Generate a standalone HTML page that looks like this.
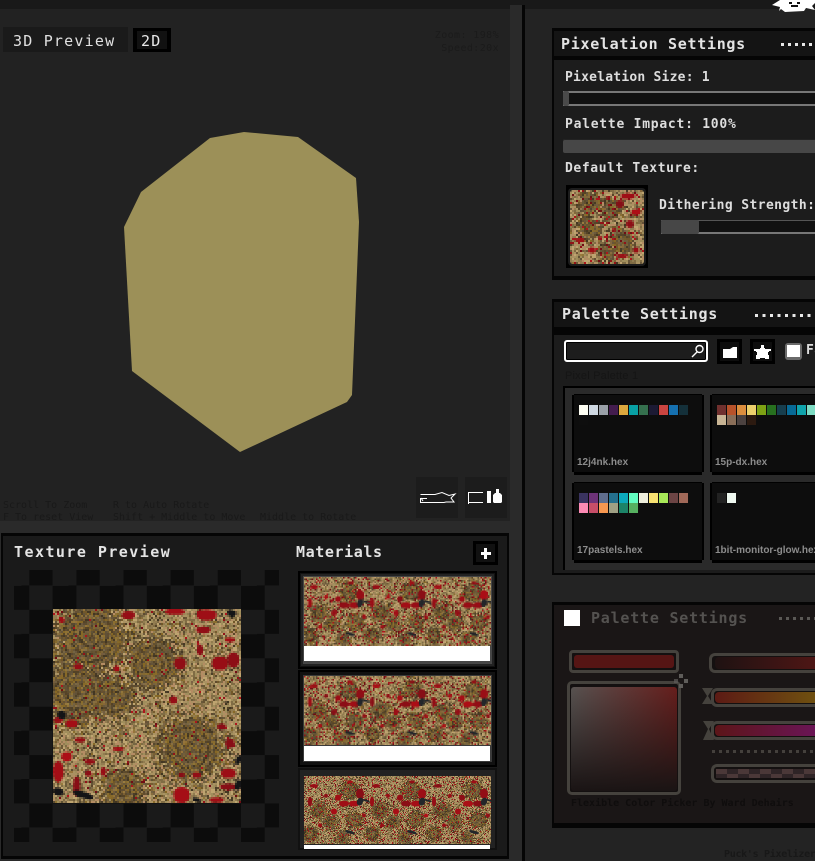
<!DOCTYPE html>
<html><head><meta charset="utf-8"><style>
html,body{margin:0;padding:0;background:#222}
#r{position:relative;width:815px;height:861px;overflow:hidden;background:#222;font-family:"DejaVu Sans Mono","Liberation Mono",monospace;color:#e4e4e4}
#r div,#r canvas,#r svg{position:absolute}
.t{white-space:nowrap;font-weight:bold;line-height:16px;height:16px}
.big{font-size:15px;letter-spacing:.7px}
.lab{font-size:13px;letter-spacing:.45px;color:#ddd}
.dim{font-size:10px;font-weight:normal;color:#191919;line-height:12px;height:12px;white-space:nowrap}
.card{background:#0d0d0d;box-shadow:0 -1px 0 #000,0 3px 0 #000,-2px 0 0 #000,2px 0 0 #000;width:128px;height:77px}
.s{width:9px;height:10px}
.n{font:bold 10px/12px "Liberation Sans",sans-serif;color:#8c8c8c;white-space:nowrap;height:12px}
canvas{image-rendering:pixelated;display:block}
.wh{background:#fff}
.dots{height:3px;background:repeating-linear-gradient(90deg,#e8e8e8 0 3px,transparent 3px 7px)}
.rail{border:3px solid #45423d;border-right:0;border-radius:6px 0 0 6px;box-sizing:border-box;background:#141010}
.fill{left:3px;top:3px;bottom:3px;right:0;border-radius:4px 0 0 4px}
</style></head><body><div id="r">
<!-- top bar and left bands -->
<div style="left:0;top:0;width:815px;height:9px;background:#191919"></div>
<div style="left:510px;top:5px;width:12px;height:856px;background:#2a2a2a"></div>
<div style="left:0;top:521px;width:522px;height:340px;background:#2a2a2a"></div>
<div style="left:522px;top:5px;width:3px;height:856px;background:#050505"></div>
<div style="left:525px;top:9px;width:290px;height:852px;background:#232323"></div>

<!-- viewport -->
<svg style="left:0;top:0" width="510" height="521"><polygon fill="#9c9058" points="210,138 244,132 298,137 356,178 359,222 352,395 347,402 240,452 132,371 124,227 141,192"/></svg>
<div style="left:3px;top:27px;width:125px;height:25px;background:#1a1a1a"></div>
<div class="t" style="left:13px;top:33px;font-size:15px;letter-spacing:1.200px;font-weight:normal;color:#e0e0e0">3D Preview</div>
<div style="left:133px;top:28px;width:38px;height:24px;background:#000"></div>
<div style="left:137px;top:31px;width:30px;height:18px;background:#111"></div>
<div class="t" style="left:141px;top:33px;font-size:15px;letter-spacing:1.200px;font-weight:normal;color:#e8e8e8">2D</div>
<div class="dim" style="right:316px;top:30px;color:#1b1b1b;letter-spacing:.4px">Zoom: 198%</div>
<div class="dim" style="right:316px;top:43px;color:#1b1b1b;letter-spacing:.4px">Speed:20x</div>
<div class="dim" style="left:3px;top:500px">Scroll To Zoom</div>
<div class="dim" style="left:113px;top:500px">R to Auto Rotate</div>
<div class="dim" style="left:3px;top:512px">F To reset View</div>
<div class="dim" style="left:113px;top:512px">Shift + Middle to Move</div>
<div class="dim" style="left:260px;top:512px">Middle to Rotate</div>
<div style="left:416px;top:477px;width:42px;height:41px;background:#1c1c1c"></div>
<div style="left:465px;top:477px;width:42px;height:41px;background:#1c1c1c"></div>
<svg style="left:416px;top:477px" width="92" height="41" fill="none" stroke="#fff" stroke-width="1"><path d="M4.500 17.500H19L26 15.500L33 18.500L39 17L35 21L38 25H30L28 25.500H4.500V21"/><path d="M5 21.500H11M5 21L7 24"/><path d="M52.500 15V27M53 15.500H67M53 25.500H67"/><rect x="71" y="14" width="4" height="12" fill="#fff" stroke="none"/><path d="M79 16H84L86 18V25L85 26H78L77 25V18Z M80 12H83V16H80Z" fill="#fff" stroke="none"/></svg>

<!-- texture preview panel -->
<div style="left:1px;top:533px;width:508px;height:326px;background:#1a1a1a;box-shadow:inset 0 3px 0 #050505,inset 2px 0 0 #050505,inset -2px 0 0 #050505,inset 0 -3px 0 #050505"></div>
<div class="t big" style="left:14px;top:544px;letter-spacing:1.450px">Texture Preview</div>
<div class="t big" style="left:296px;top:544px;letter-spacing:.6px">Materials</div>
<div style="left:473px;top:541px;width:25px;height:24px;background:#000"></div>
<div style="left:476px;top:544px;width:19px;height:18px;background:#111"></div>
<div style="left:481px;top:552px;width:10px;height:3px;background:#fff"></div>
<div style="left:484px;top:548px;width:3px;height:11px;background:#fff"></div>
<div style="left:14px;top:570px;width:265px;height:272px;background:conic-gradient(#0c0c0c 25%,#1a1a1a 0 50%,#0c0c0c 0 75%,#1a1a1a 0);background-size:47.100px 48.400px;background-position:-8.500px -8.500px"></div>
<canvas id="c0" width="94" height="97" style="left:53px;top:609px;width:188px;height:194px;background:#a8935f"></canvas>

<div style="left:298px;top:571px;width:199px;height:98px;background:#111;box-shadow:inset 0 0 0 2px #000"></div>
<div style="left:301px;top:574px;width:193px;height:92px;background:#464646;box-shadow:inset 0 0 0 2px #222"></div>
<canvas class="m" width="125" height="46" style="left:304px;top:577px;width:187px;height:69px;background:#a8935f"></canvas>
<div class="wh" style="left:304px;top:646px;width:186px;height:15px"></div>
<div style="left:298px;top:670px;width:199px;height:97px;background:#111;box-shadow:inset 0 0 0 2px #000"></div>
<div style="left:301px;top:673px;width:193px;height:91px;background:#3a3a3a;box-shadow:inset 0 0 0 2px #111"></div>
<canvas class="m" width="125" height="46" style="left:304px;top:676px;width:187px;height:69px;background:#a8935f"></canvas>
<div class="wh" style="left:304px;top:746px;width:186px;height:15px"></div>
<div style="left:298px;top:768px;width:199px;height:82px;background:#222;box-shadow:inset 0 0 0 2px #111"></div>
<canvas class="m" data-fine="1" width="187" height="68" style="left:304px;top:776px;width:187px;height:68px;background:#a8935f"></canvas>
<div class="wh" style="left:304px;top:845px;width:186px;height:4px"></div>

<!-- pixelation panel -->
<div style="left:552px;top:28px;width:263px;height:252px;background:#050505"></div>
<div style="left:554px;top:60px;width:261px;height:216px;background:#1c1c1c"></div>
<div style="left:554px;top:31px;width:261px;height:25px;background:#141414"></div>
<div class="t big" style="left:561px;top:36px">Pixelation Settings</div>
<div class="dots" style="left:781px;top:43px;width:34px"></div>
<div class="t lab" style="left:565px;top:70px;letter-spacing:.22px">Pixelation Size: 1</div>
<div style="left:563px;top:91px;width:252px;height:15px;background:#111;box-shadow:inset 0 2px 0 #777,inset 0 -2px 0 #777"></div>
<div style="left:563px;top:91px;width:6px;height:15px;background:#4a4a4a;border-radius:2px"></div>
<div class="t lab" style="left:565px;top:117px;letter-spacing:.75px">Palette Impact: 100%</div>
<div style="left:563px;top:139px;width:252px;height:14px;background:#474747;border-radius:2px 0 0 2px;box-shadow:inset 0 1px 0 #222"></div>
<div class="t lab" style="left:565px;top:161px;letter-spacing:.6px">Default Texture:</div>
<div style="left:566px;top:185px;width:82px;height:83px;background:#000"></div>
<div style="left:568px;top:188px;width:78px;height:78px;background:#1c1c1c;border-radius:4px"></div>
<canvas id="c1" width="37" height="37" style="left:570px;top:190px;width:74px;height:74px;background:#a8935f;border-radius:3px"></canvas>
<div class="t lab" style="left:659px;top:198px;letter-spacing:.4px">Dithering Strength:</div>
<div style="left:661px;top:220px;width:154px;height:14px;background:#111;box-shadow:inset 0 1px 0 #555,inset 0 -2px 0 #777"></div>
<div style="left:661px;top:220px;width:38px;height:14px;background:#474747;border-radius:2px"></div>

<!-- palette settings panel -->
<div style="left:552px;top:299px;width:263px;height:276px;background:#050505"></div>
<div style="left:554px;top:335px;width:261px;height:238px;background:#1c1c1c"></div>
<div style="left:554px;top:302px;width:261px;height:25px;background:#141414"></div>
<div class="t big" style="left:562px;top:306px;letter-spacing:.72px">Palette Settings</div>
<div class="dots" style="left:755px;top:314px;width:60px;background:repeating-linear-gradient(90deg,#e8e8e8 0 3px,transparent 3px 7.500px)"></div>
<div style="left:564px;top:340px;width:144px;height:22px;box-sizing:border-box;border:2px solid #fff;border-radius:3px;background:#1d1d1d;box-shadow:inset 0 0 0 1px #000"></div>
<svg style="left:690px;top:344px" width="15" height="15" fill="none" stroke="#fff" stroke-width="1.400"><circle cx="9.500" cy="5" r="3.500"/><path d="M7 8L2 13"/></svg>
<div style="left:717px;top:339px;width:25px;height:25px;background:#000"></div>
<div style="left:720px;top:342px;width:19px;height:19px;background:#0d0d0d"></div>
<svg style="left:717px;top:339px" width="26" height="26" fill="#fff"><path d="M6 10H13L16 8H20V19H6Z"/></svg>
<div style="left:750px;top:339px;width:25px;height:25px;background:#000"></div>
<div style="left:753px;top:342px;width:19px;height:19px;background:#0d0d0d"></div>
<svg style="left:750px;top:339px" width="26" height="26" fill="#fff"><path d="M11 6H14V9H15V10H21V12H19V13H18V16H19V20H15V19H10V20H6V16H7V13H6V12H4V10H10V9H11Z"/></svg>
<div style="left:785px;top:343px;width:17px;height:17px;background:#6a6a6a;border-radius:3px"></div>
<div style="left:787px;top:345px;width:13px;height:12px;background:#fff"></div>
<div class="t lab" style="left:806px;top:343px">Fa</div>
<div class="t" style="left:565px;top:368px;font:11px/16px 'Liberation Sans',sans-serif;color:#151515;letter-spacing:.2px">Pixel Palette 1</div>
<div style="left:563px;top:386px;width:252px;height:184px;background:#2a2a2a;box-shadow:inset 0 2px 0 #000,inset 2px 0 0 #000"></div>
<div class="card" style="left:574px;top:395px"></div>
<div class="card" style="left:712px;top:395px;width:110px"></div>
<div class="card" style="left:574px;top:483px"></div>
<div class="card" style="left:712px;top:483px;width:110px"></div>
<div id="sw"></div>
<div class="n" style="left:577px;top:457px">12j4nk.hex</div>
<div class="n" style="left:715px;top:457px">15p-dx.hex</div>
<div class="n" style="left:577px;top:545px">17pastels.hex</div>
<div class="n" style="left:715px;top:545px">1bit-monitor-glow.hex</div>

<!-- dim colour picker panel -->
<div style="left:552px;top:602px;width:263px;height:226px;background:#050505"></div>
<div style="left:554px;top:605px;width:261px;height:218px;background:#1a1616"></div>
<div class="wh" style="left:564px;top:610px;width:16px;height:16px"></div>
<div class="t big" style="left:591px;top:610px;letter-spacing:.78px;color:#545250">Palette Settings</div>
<div class="dots" style="left:779px;top:617px;width:36px;background:repeating-linear-gradient(90deg,#5a5855 0 3px,transparent 3px 7px)"></div>
<div style="left:569px;top:650px;width:110px;height:23px;box-sizing:border-box;border:3px solid #45423d;border-radius:4px;background:#141010"></div>
<div style="left:574px;top:655px;width:100px;height:13px;background:#561514;border-radius:3px"></div>
<div style="left:567px;top:681px;width:114px;height:114px;box-sizing:border-box;border:3px solid #45423d;border-radius:5px;background:#141010"></div>
<div style="left:571px;top:687px;width:106px;height:104px;border-radius:3px;background:linear-gradient(to bottom,rgba(26,20,20,0),#1a1414),linear-gradient(to right,#575250,#661e1c)"></div>
<svg style="left:673px;top:673px" width="16" height="16" fill="#5f5d5a"><rect x="6" y="1" width="4" height="4"/><rect x="6" y="11" width="4" height="4"/><rect x="1" y="6" width="4" height="4" opacity=".7"/><rect x="11" y="6" width="4" height="4"/></svg>

<div class="rail" style="left:709px;top:653px;width:106px;height:20px"><div class="fill" style="left:3px;top:1px;bottom:1px;background:linear-gradient(90deg,#1e1212,#4e1615)"></div></div>
<div class="rail" style="left:711px;top:688px;width:104px;height:19px"><div class="fill" style="left:1px;top:1px;bottom:1px;background:linear-gradient(90deg,#5c1a14,#6f5010 100%)"></div></div>
<div class="rail" style="left:711px;top:721px;width:104px;height:19px"><div class="fill" style="left:1px;top:1px;bottom:1px;background:linear-gradient(90deg,#5c1518,#6a1555 100%)"></div></div>
<svg style="left:701px;top:687px" width="14" height="56" fill="#45423d"><path d="M1 1H12L7 9L12 17H1L6 9Z"/><path d="M2 34H13L8 42L13 53H2L7 42Z"/></svg>
<div style="left:712px;top:750px;width:103px;height:3px;background:repeating-linear-gradient(90deg,#44403c 0 3px,transparent 3px 7px)"></div>
<div class="rail" style="left:711px;top:764px;width:104px;height:19px"></div>
<div style="left:716px;top:769px;width:99px;height:9px;background:conic-gradient(#2f2426 25%,#4b3838 0 50%,#2f2426 0 75%,#4b3838 0);background-size:22px 10px"></div>
<div class="t" style="left:571px;top:796px;font-size:10px;color:#0f0d0d">Flexible Color Picker By Ward Dehairs</div>
<div class="t" style="left:724px;top:847px;font-size:10px;letter-spacing:-.3px;color:#181818">Puck's Pixelizer</div>

<!-- logo -->
<svg style="left:770px;top:0" width="45" height="13"><path fill="#fff" d="M2 5L10 0H39L45 0V3L42 6L45 10L36 8L34 11L15 12L11 9L9 11L10 7Z"/><path fill="#111" d="M19 2h3v2h-3zM27 2h3v2h-3zM21 5h7v2h-7z"/></svg>
</div>
<script>
(function(){
var rows=[
[572,394,["#fffff4","#cfd8e2","#9aa0a8","#431c4e","#dca83e","#08a0a4","#35704e","#1c1a34","#c94440","#1570b0","#14303a","#0e0e0e"]],
[710,394,["#70302e","#b8522a","#dc8e3e","#ecd06c","#7ea214","#27701f","#173e4e","#076a96","#10a4ac","#7edcc4","#eef6d8","#c8b494","#8a6e58","#4c4240","#2c1a10"]],
[572,482,["#3a3360","#6e3378","#606e8e","#24708e","#0caabc","#62fcc0","#eeeedc","#f8e272","#a8e858","#6c4444","#a06858","#fc8ab4","#c84e68","#f89850","#a0a084","#1c8468","#56b060"]],
[710,482,["#222222","#eef8f0"]]];
var h='',host=document.getElementById('sw');
rows.forEach(function(r){r[2].forEach(function(c,i){
 var col=i%11,row=Math.floor(i/11);
 h+='<div class="s" style="left:'+(r[0]+7+col*10)+'px;top:'+(r[1]+11+row*10)+'px;background:'+c+'"></div>';
});});
host.innerHTML=h;
var seed=7;function R(){seed=(seed*16807)%2147483647;return seed/2147483647;}
function mix(a,b,t){return [a[0]+(b[0]-a[0])*t,a[1]+(b[1]-a[1])*t,a[2]+(b[2]-a[2])*t];}
var tans=[[170,146,98],[190,164,112],[146,124,80],[180,140,100],[160,142,92],[128,108,68]];
var browns=[[84,66,38],[112,86,40],[66,54,34],[134,104,38],[96,80,54]];
var reds=[[146,18,24],[172,22,28],[112,14,20]];
function paint(cv,o){
 var w=cv.width,h=cv.height,x=cv.getContext('2d');
 for(var j=0;j<h;j++)for(var i=0;i<w;i++){
  var u=i/w*o.ux,v=j/h*o.uy,d=0,sw=0;
  o.dark.forEach(function(p){var dx=u-p[0],dy=v-p[1],q=Math.sqrt(dx*dx+dy*dy);var k=Math.max(0,1-q/p[2]);if(k>d){d=k;sw=q;}});
  var c=tans[Math.floor(R()*tans.length)];
  var band=Math.sin(sw*.8+u*.1)*.5+.5;
  if(R()<d*1.7+.2)c=mix(browns[Math.floor(R()*browns.length)],c,band*.35);
  if(R()<o.speck)c=reds[Math.floor(R()*3)];
  x.fillStyle='rgb('+Math.round(c[0])+','+Math.round(c[1])+','+Math.round(c[2])+')';
  x.fillRect(i,j,1,o.tall&&R()<.3?3:1);
 }
 var sx=w/o.ux,sy=h/o.uy;
 o.red.forEach(function(p){
  x.fillStyle='rgb('+[135+Math.floor(R()*40),14,22].join(',')+')';
  x.beginPath();x.ellipse(p[0]*sx,p[1]*sy,p[2]*sx,(p[3]||p[2])*sy,0,0,7);x.fill();
 });
 x.fillStyle=o.holeC||'#141416';
 o.hole.forEach(function(p){x.beginPath();x.ellipse(p[0]*sx,p[1]*sy,p[2]*sx,p[3]*sy,.3,0,7);x.fill();});
}
var Z=function(a){return a.map(function(p){return [p[0]/3-53,p[1]/3-9,p[2]/3,p[3]?p[3]/3:undefined];});};
paint(document.getElementById('c0'),{ux:188,uy:194,speck:.02,tall:1,
 dark:Z([[270,110,150],[460,190,110],[230,270,135],[340,290,80],[570,440,135],[370,570,90]]),
 red:Z([[620,45,30,16],[525,35,30,9],[385,45,20,12],[610,90,22,10],[690,120,16,7],[660,190,24,20],[700,180,18,22],[540,190,18,18],[215,370,18,12],[520,300,12],[665,380,14,9],[690,430,14],[200,470,16,14],[175,515,16,32],[685,520,22,14],[685,560,26,10],[545,585,24,24],[650,600,22,8],[270,485,16,8],[265,520,10],[240,420,16,8],[350,205,9],[235,200,14,9],[185,60,9],[600,150,10,16],[355,447,18,6],[310,515,8,14],[230,560,10,30],[590,525,14,9],[545,525,10,8],[175,360,14,9]]),
 hole:Z([[185,345,14,12],[250,585,32,10],[175,575,16,12],[695,40,14,10],[715,480,8,14],[715,555,10,16],[590,600,14,6]])});
paint(document.getElementById('c1'),{ux:74,uy:74,speck:.08,
 dark:[[20,12,16],[40,18,14],[18,38,16],[52,52,16],[36,62,12]],
 red:[[58,6,7,3],[50,14,4],[66,22,5,3],[60,34,4],[10,50,5,2],[22,60,4,3],[52,66,6,2],[30,48,2],[66,60,3],[38,8,2],[44,40,2]],hole:[]});
var ms=[].slice.call(document.querySelectorAll('.m'));
ms.forEach(function(cv){
 var dark=[],red=[],hole=[];
 for(var k=0;k<3;k++){var ox=k*62;
  dark.push([ox+14,35,13],[ox+26,46,11],[ox+45,14,13],[ox+50,44,12],[ox+6,58,11],[ox+38,62,10]);
  red.push([ox+56,18,4,5],[ox+50,28,5,3],[ox+40,28,5,3],[ox+34,22,3],[ox+6,26,2,5],[ox+10,10,4,2],[ox+30,36,3],[ox+60,40,2],[ox+22,20,2],[ox+46,6,3,1.500],[ox+16,50,2]);
  hole.push([ox+56,26,3,4],[ox+62,25,4,1],[ox+46,57,5,1.500]);
 }
 paint(cv,{ux:187,uy:69,speck:.11,holeC:'#23262a',dark:dark,red:red,hole:hole});
});
})();
</script>
</body></html>
